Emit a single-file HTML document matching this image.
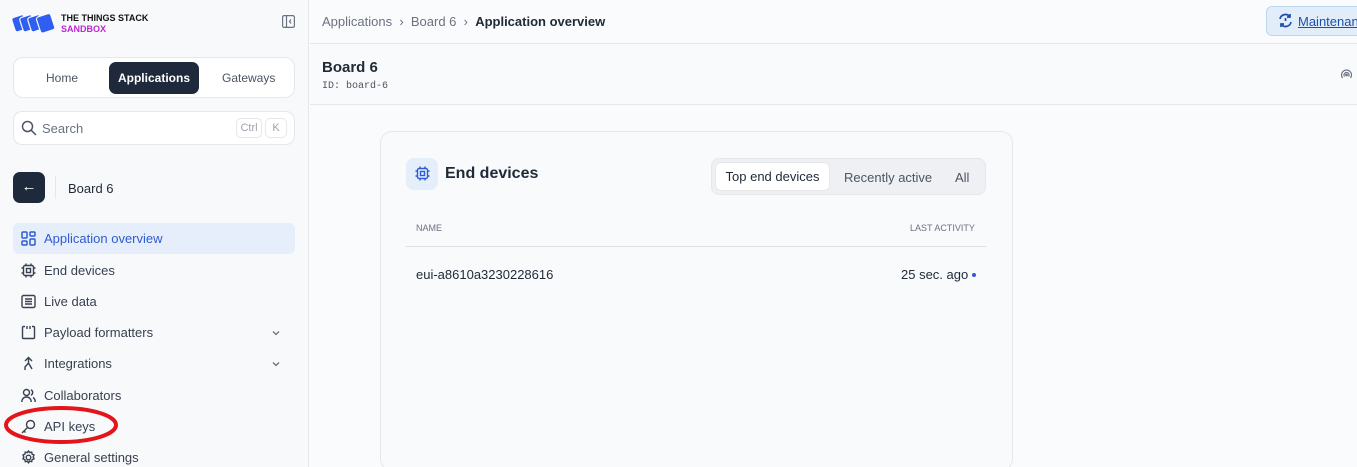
<!DOCTYPE html>
<html><head><meta charset="utf-8"><style>
*{box-sizing:border-box;margin:0;padding:0}
html,body{width:1357px;height:467px;overflow:hidden}
body{background:#fafbfc;font-family:"Liberation Sans",sans-serif;color:#1f2937;position:relative}
.sb{position:absolute;left:0;top:0;width:309px;height:467px;background:#f8f9fb;border-right:1px solid #e5e7eb}
.abs{position:absolute}
.nav{position:absolute;left:13px;width:282px;height:31px;display:flex;align-items:center;font-size:13px;color:#374151}
.nav svg{margin-left:8px;margin-right:8px}
.chev{position:absolute;right:6px;top:11px}
</style></head><body>
<div class="sb">
 <svg class="abs" style="left:12px;top:11px" width="44" height="24" viewBox="0 0 44 24">
  <g fill="#2f5ff0" stroke="#f8f9fb" stroke-width="1.2">
   <rect x="1" y="5" width="13" height="15" rx="2.5" transform="rotate(-18 7 12)"/>
   <rect x="9" y="5" width="13" height="15" rx="2.5" transform="rotate(-18 15 12)"/>
   <rect x="17" y="5" width="13" height="15" rx="2.5" transform="rotate(-18 23 12)"/>
   <rect x="26" y="4" width="15" height="17" rx="2.5" transform="rotate(-18 33 12)"/>
  </g>
 </svg>
 <div class="abs" style="left:61px;top:13px;font-size:9px;font-weight:bold;line-height:11px;color:#111">THE THINGS STACK<br><span style="color:#c026d3">SANDBOX</span></div>
 <svg class="abs" style="left:282px;top:15px" width="13" height="13" viewBox="0 0 13 13" fill="none" stroke="#6b7280" stroke-width="1.2"><rect x="0.6" y="0.6" width="11.8" height="11.8" rx="1.5"/><line x1="4.5" y1="1" x2="4.5" y2="12"/><path d="M9 4.5L7.5 6.5 9 8.5"/></svg>
 <div class="abs" style="left:13px;top:57px;width:282px;height:41px;background:#fff;border:1px solid #e5e7eb;border-radius:10px"></div>
 <div class="abs" style="left:109px;top:62px;width:90px;height:32px;background:#1e2a3b;border-radius:7px;color:#fff;font-size:12px;font-weight:bold;text-align:center;line-height:32px">Applications</div>
 <div class="abs" style="left:46px;top:71px;font-size:12px;color:#4b5563">Home</div>
 <div class="abs" style="left:222px;top:71px;font-size:12px;color:#4b5563">Gateways</div>
 <div class="abs" style="left:13px;top:111px;width:282px;height:34px;background:#fff;border:1px solid #e5e7eb;border-radius:9px"></div>
 <svg class="abs" style="left:21px;top:120px" width="16" height="16" viewBox="0 0 16 16" fill="none" stroke="#4b5563" stroke-width="1.5"><circle cx="6.5" cy="6.5" r="5"/><line x1="10.3" y1="10.3" x2="15" y2="15"/></svg>
 <div class="abs" style="left:42px;top:121px;font-size:13px;color:#6b7280">Search</div>
 <div class="abs" style="left:236px;top:118px;width:26px;height:20px;border:1px solid #e5e7eb;border-radius:5px;font-size:11px;color:#9ca3af;text-align:center;line-height:18px">Ctrl</div>
 <div class="abs" style="left:265px;top:118px;width:22px;height:20px;border:1px solid #e5e7eb;border-radius:5px;font-size:11px;color:#9ca3af;text-align:center;line-height:18px">K</div>
 <div class="abs" style="left:13px;top:172px;width:32px;height:31px;background:#1e2a3b;border-radius:7px;color:#fff;font-size:15px;text-align:center;line-height:30px">←</div>
 <div class="abs" style="left:55px;top:176px;width:1px;height:23px;background:#e5e7eb"></div>
 <div class="abs" style="left:68px;top:181px;font-size:13px;color:#1f2937">Board 6</div>

 <div class="nav" style="top:223px;background:#e6eefb;border-radius:6px;color:#2f5bd3"><svg width="15" height="15" viewBox="0 0 15 15" fill="none" stroke="#2f5bd3" stroke-width="1.5"><rect x="1" y="1" width="5" height="6" rx="1"/><rect x="9" y="1" width="5" height="4" rx="1"/><rect x="1" y="10" width="5" height="4" rx="1"/><rect x="9" y="8" width="5" height="6" rx="1"/></svg>Application overview</div>
 <div class="nav" style="top:255px"><svg width="15" height="15" viewBox="0 0 15 15" fill="none" stroke="#374151" stroke-width="1.4"><rect x="2.5" y="2.5" width="10" height="10" rx="1.5"/><rect x="5.5" y="5.5" width="4" height="4"/><path d="M5 0.5v2M10 0.5v2M5 12.5v2M10 12.5v2M0.5 5h2M0.5 10h2M12.5 5h2M12.5 10h2"/></svg>End devices</div>
 <div class="nav" style="top:286px"><svg width="15" height="15" viewBox="0 0 15 15" fill="none" stroke="#374151" stroke-width="1.4"><rect x="1" y="1.5" width="13" height="12" rx="1.5"/><path d="M4 5h7M4 7.5h7M4 10h7"/></svg>Live data</div>
 <div class="nav" style="top:317px"><svg width="15" height="15" viewBox="0 0 15 15" fill="none" stroke="#374151" stroke-width="1.4"><path d="M4 1.5H2.5a1 1 0 0 0-1 1V12.5a1 1 0 0 0 1 1h10a1 1 0 0 0 1-1V2.5a1 1 0 0 0-1-1H11M6 1v3M9 1v3"/></svg>Payload formatters<svg class="chev" width="10" height="10" viewBox="0 0 10 10" fill="none" stroke="#6b7280" stroke-width="1.3"><path d="M2 3.5l3 3 3-3"/></svg></div>
 <div class="nav" style="top:348px"><svg width="15" height="15" viewBox="0 0 15 15" fill="none" stroke="#374151" stroke-width="1.4"><path d="M4 5L7.5 1.5 11 5M7.5 1.5V7L11 13M7.5 7L4 11v3"/></svg>Integrations<svg class="chev" width="10" height="10" viewBox="0 0 10 10" fill="none" stroke="#6b7280" stroke-width="1.3"><path d="M2 3.5l3 3 3-3"/></svg></div>
 <div class="nav" style="top:380px"><svg width="15" height="15" viewBox="0 0 15 15" fill="none" stroke="#374151" stroke-width="1.4"><circle cx="5.5" cy="4.5" r="3"/><path d="M0.8 14c0-3 2-5 4.7-5s4.7 2 4.7 5M10 1.8a3 3 0 0 1 0 5.4M12 9.5c1.4.8 2.2 2.5 2.2 4.5"/></svg>Collaborators</div>
 <div class="nav" style="top:411px"><svg width="15" height="15" viewBox="0 0 15 15" fill="none" stroke="#374151" stroke-width="1.4"><circle cx="9.5" cy="5.5" r="4"/><path d="M6.5 8.5L1 14M3 12l1.5 1.5"/></svg>API keys</div>
 <div class="nav" style="top:442px"><svg width="15" height="15" viewBox="0 0 15 15" fill="none" stroke="#374151" stroke-width="1.4"><circle cx="7.5" cy="7.5" r="2.3"/><path d="M7.5 1l1.2 1.6 2-.5.4 2 1.9.9-.8 1.9.8 1.9-1.9.9-.4 2-2-.5-1.2 1.6-1.2-1.6-2 .5-.4-2-1.9-.9.8-1.9-.8-1.9 1.9-.9.4-2 2 .5z"/></svg>General settings</div>
 <svg class="abs" style="left:3px;top:404px" width="116" height="42" viewBox="0 0 116 42"><ellipse cx="58" cy="21" rx="55" ry="17" fill="none" stroke="#e4141b" stroke-width="4"/></svg>
</div>

<div class="abs" style="left:310px;top:0;width:1047px;height:44px;border-bottom:1px solid #e5e7eb;background:#fafbfc"></div>
<div class="abs" style="left:322px;top:14px;font-size:13px;color:#6b7280">Applications&nbsp;&nbsp;›&nbsp;&nbsp;Board 6&nbsp;&nbsp;›&nbsp;&nbsp;<span style="color:#1f2937;font-weight:bold">Application overview</span></div>
<div class="abs" style="left:1266px;top:6px;width:110px;height:30px;background:#e1eefa;border:1px solid #bcd6ef;border-radius:6px"></div>
<svg class="abs" style="left:1278px;top:13px" width="15" height="15" viewBox="0 0 15 15" fill="none" stroke="#1e4fa8" stroke-width="1.7"><path d="M2 6a5.5 5.5 0 0 1 10-2M13 9a5.5 5.5 0 0 1-10 2M12 1v3H9M3 14v-3h3M7.5 5v3"/></svg>
<div class="abs" style="left:1298px;top:14px;font-size:13px;color:#1e4fa8;text-decoration:underline">Maintenance</div>
<div class="abs" style="left:310px;top:45px;width:1047px;height:60px;border-bottom:1px solid #e5e7eb;background:#f9fafb"></div>
<div class="abs" style="left:322px;top:59px;font-size:15px;font-weight:bold;color:#1f2937">Board 6</div>
<div class="abs" style="left:322px;top:81px;font-size:10px;font-family:'Liberation Mono',monospace;color:#4b5563">ID: board-6</div>
<svg class="abs" style="left:1340px;top:68px" width="13" height="13" viewBox="0 0 13 13" fill="none" stroke="#6b7280" stroke-width="1.2"><path d="M2.5 10a5 5 0 1 1 8 0M4.5 8.5a2.5 2.5 0 1 1 4 0"/><circle cx="6.5" cy="7" r="0.8"/></svg>

<div class="abs" style="left:380px;top:131px;width:633px;height:340px;background:#f8fafc;border:1px solid #e5e7eb;border-radius:12px"></div>
<div class="abs" style="left:406px;top:158px;width:32px;height:32px;background:#e5eefb;border-radius:8px"></div>
<svg class="abs" style="left:415px;top:166px" width="15" height="15" viewBox="0 0 15 15" fill="none" stroke="#2f5bd3" stroke-width="1.4"><rect x="2.5" y="2.5" width="10" height="10" rx="1.5"/><rect x="5.5" y="5.5" width="4" height="4"/><path d="M5 0.5v2M10 0.5v2M5 12.5v2M10 12.5v2M0.5 5h2M0.5 10h2M12.5 5h2M12.5 10h2"/></svg>
<div class="abs" style="left:445px;top:165px;font-size:16px;font-weight:bold;color:#1f2937">End devices</div>
<div class="abs" style="left:711px;top:158px;width:275px;height:37px;background:#eef0f3;border:1px solid #e5e7eb;border-radius:8px"></div>
<div class="abs" style="left:715px;top:162px;width:115px;height:29px;background:#fff;border:1px solid #e5e7eb;border-radius:6px;font-size:13px;color:#1f2937;text-align:center;line-height:28px">Top end devices</div>
<div class="abs" style="left:844px;top:170px;font-size:13px;color:#4b5563">Recently active</div>
<div class="abs" style="left:955px;top:170px;font-size:13px;color:#4b5563">All</div>
<div class="abs" style="left:416px;top:223px;font-size:9px;color:#6b7280">NAME</div>
<div class="abs" style="left:910px;top:223px;font-size:9px;color:#6b7280">LAST ACTIVITY</div>
<div class="abs" style="left:406px;top:246px;width:580px;height:1px;background:#dde1e6"></div>
<div class="abs" style="left:416px;top:267px;font-size:13px;color:#1f2937">eui-a8610a3230228616</div>
<div class="abs" style="left:901px;top:267px;font-size:13px;color:#1f2937">25 sec. ago</div>
<div class="abs" style="left:972px;top:273px;width:4px;height:4px;background:#2f5bd3;border-radius:50%"></div>
</body></html>
